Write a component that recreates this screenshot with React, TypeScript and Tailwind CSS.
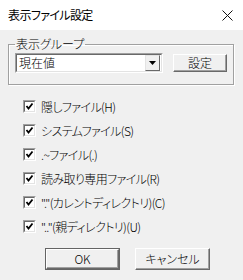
import React from "react";

const items = [
  "隠しファイル(H)",
  "システムファイル(S)",
  ".~ファイル(.)",
  "読み取り専用ファイル(R)",
  '"."(カレントディレクトリ)(C)',
  '".."(親ディレクトリ)(U)',
];

function CheckBox() {
  return (
    <span className="flex h-[13px] w-[13px] shrink-0 items-center justify-center border border-t-[#a0a0a0] border-l-[#a0a0a0] border-b-white border-r-white">
      <span className="flex h-[11px] w-[11px] items-center justify-center border border-t-[#696969] border-l-[#696969] border-b-[#e3e3e3] border-r-[#e3e3e3] bg-white">
        <svg width="9" height="9" viewBox="0 0 9 9">
          <path d="M1.5 4 L3.5 6.5 L7.5 1.5" stroke="#000" strokeWidth="1.8" fill="none" />
        </svg>
      </span>
    </span>
  );
}

function Button({ label, isDefault }: { label: string; isDefault?: boolean }) {
  return (
    <button
      type="button"
      className={`h-[22px] w-[75px] ${isDefault ? "border border-[#646464]" : ""}`}
    >
      <span className="flex h-full w-full items-center justify-center border border-t-white border-l-white border-b-[#696969] border-r-[#696969] bg-[#f0f0f0] text-[12px] text-black shadow-[inset_-1px_-1px_0_#a0a0a0]">
        {label}
      </span>
    </button>
  );
}

export default function App() {
  return (
    <div
      className="h-[280px] w-[243px] overflow-hidden bg-[#f0f0f0] text-black [font-feature-settings:'palt']"
      style={{ fontFamily: '"Noto Sans CJK JP", "Noto Sans", sans-serif' }}
    >
      <div className="flex h-[30px] items-center justify-between bg-white pl-2 pr-[10px]">
        <span className="text-[12px] leading-none tracking-[-0.6px]">表示ファイル設定</span>
        <svg width="11" height="11" viewBox="0 0 11 11">
          <path d="M0.5 0.5 L10.5 10.5 M10.5 0.5 L0.5 10.5" stroke="#111" strokeWidth="1" />
        </svg>
      </div>

      <div className="px-2 pt-[7px] font-light">
        <fieldset className="w-[224px] border border-[#a0a0a0] px-[6px] pb-[11px] shadow-[inset_1px_1px_0_white,1px_1px_0_white]">
          <legend className="px-[1px] text-[12px] leading-[14px]">表示グループ</legend>
          <div className="mt-[2px] flex items-center">
            <div className="flex h-[20px] w-[148px] border border-t-[#a0a0a0] border-l-[#a0a0a0] border-b-white border-r-white">
              <div className="flex flex-1 items-center border border-t-[#696969] border-l-[#696969] border-b-[#e3e3e3] border-r-[#e3e3e3] bg-white pl-[2px] pr-[1px]">
                <span className="flex-1 text-[12px] leading-none">現在値</span>
                <span className="flex h-[16px] w-[15px] items-center justify-center border border-t-[#e3e3e3] border-l-[#e3e3e3] border-b-[#696969] border-r-[#696969] bg-[#f0f0f0]">
                  <svg width="7" height="4" viewBox="0 0 7 4">
                    <path d="M0 0 H7 L3.5 4 Z" fill="#000" />
                  </svg>
                </span>
              </div>
            </div>
            <div className="ml-[10px] flex h-[18px] w-[54px] border border-t-white border-l-white border-b-[#696969] border-r-[#696969] shadow-[inset_-1px_-1px_0_#a0a0a0]">
              <span className="flex flex-1 items-center justify-center text-[12px] leading-none">設定</span>
            </div>
          </div>
        </fieldset>

        <div className="mt-[15px] flex flex-col gap-[11px] pl-[15px]">
          {items.map((label) => (
            <div key={label} className="flex h-[13px] items-center gap-[5px]">
              <CheckBox />
              <span className="text-[12px] leading-none tracking-[-0.6px]">{label}</span>
            </div>
          ))}
        </div>

        <div className="mt-[15px] flex gap-[15px] pl-[37px]">
          <Button label="OK" isDefault />
          <Button label="キャンセル" />
        </div>
      </div>
    </div>
  );
}
